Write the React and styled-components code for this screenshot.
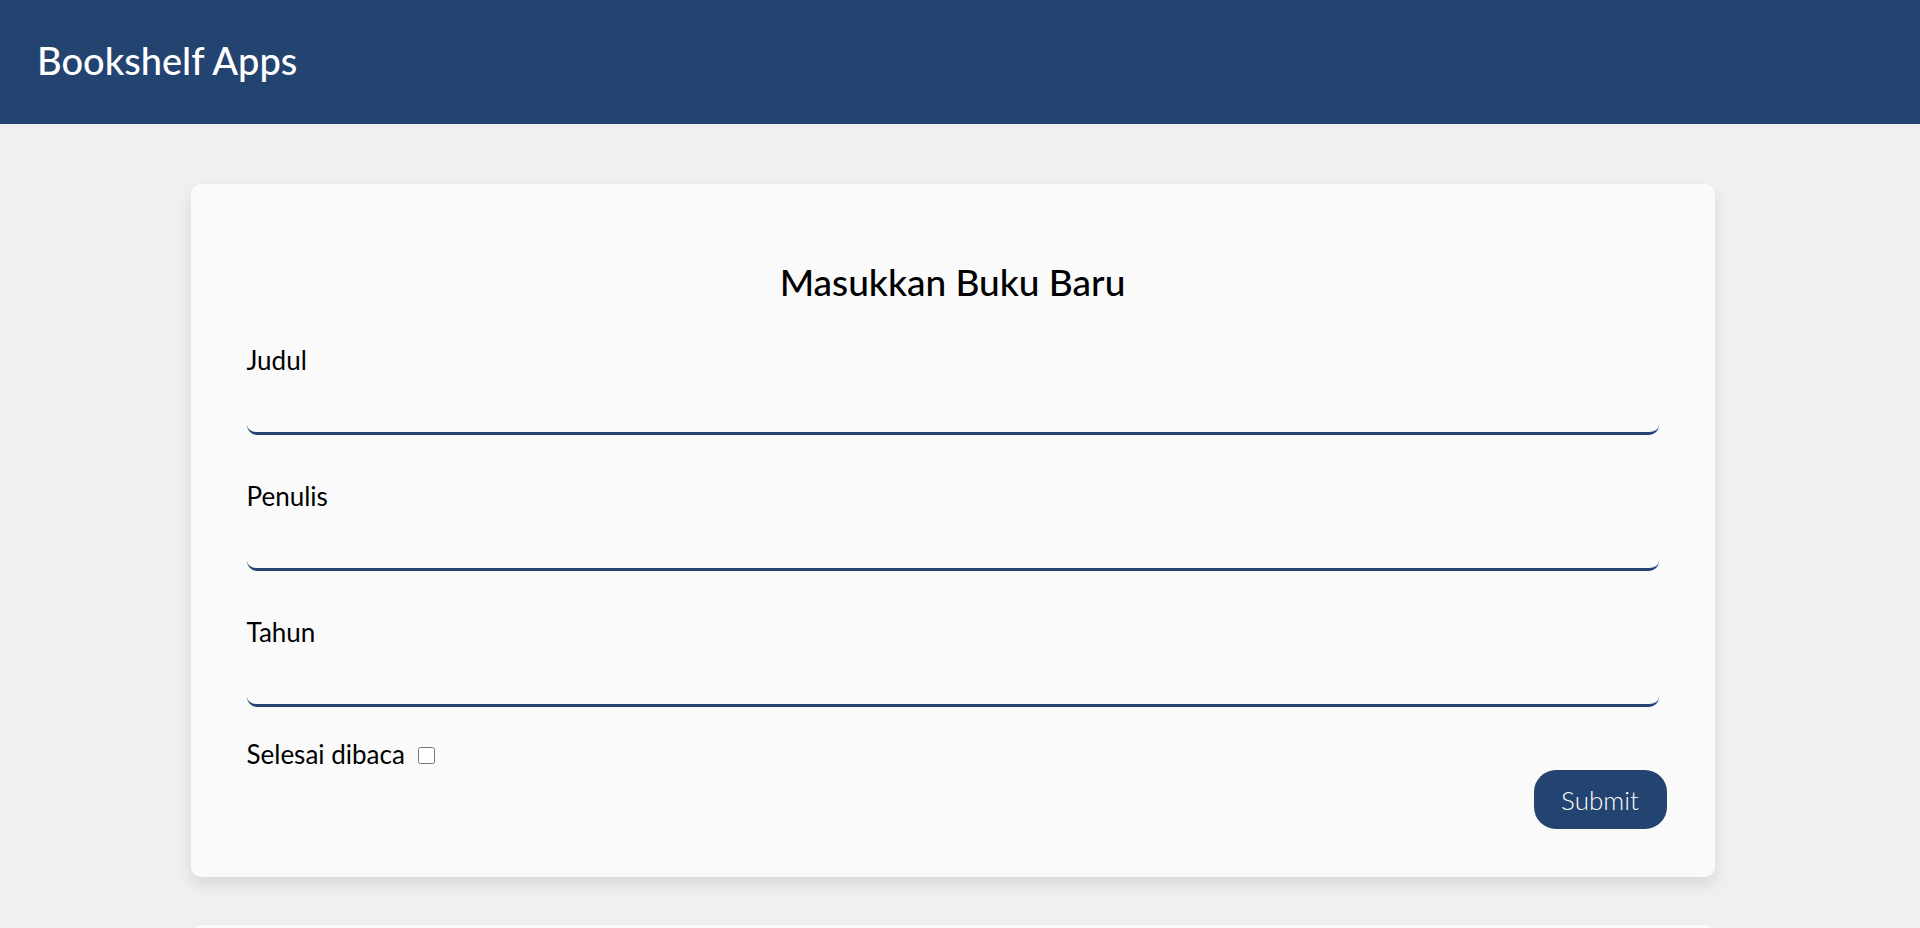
import React from 'react';
import styled, { createGlobalStyle } from 'styled-components';

const GlobalStyle = createGlobalStyle`
  * {
    box-sizing: border-box;
  }

  body {
    margin: 0;
    background: #f0f0f0;
    font-family: Lato, "Open Sans", sans-serif;
    color: #000;
  }
`;

const Header = styled.header`
  height: 124px;
  background: #234370;
  display: flex;
  align-items: center;
  padding: 0 0 5px 37px;

  h1 {
    margin: 0;
    color: #fff;
    font-size: 38px;
    font-weight: 500;
  }
`;

// the reference leaves 15px for the browser scrollbar on the right
const Main = styled.main`
  display: flex;
  flex-direction: column;
  align-items: center;
  gap: 48px;
  padding: 60px 15px 48px 0;
`;

const Card = styled.section`
  width: 80%;
  min-height: ${(p) => p.minHeight || 'auto'};
  padding: 48px;
  background: #fafafa;
  border-radius: 10px;
  box-shadow: 0 8px 16px rgba(0, 0, 0, 0.1);
`;

const Title = styled.h2`
  margin: 28px 0 41px;
  text-align: center;
  font-size: 37px;
  line-height: 44px;
  font-weight: 500;
`;

const Form = styled.form`
  display: flex;
  flex-direction: column;
`;

const Field = styled.div`
  display: flex;
  flex-direction: column;
  padding: 0 8px;
  margin-bottom: ${(p) => p.spacing || '46px'};
`;

const Label = styled.label`
  font-size: 26px;
  line-height: 31px;
  margin-bottom: 17px;
`;

const Input = styled.input`
  height: 42px;
  border: none;
  border-bottom: 3px solid #234370;
  border-radius: 10px;
  background: transparent;
  font-family: inherit;
  font-size: 22px;
  padding: 0 10px;
  outline: none;
`;

const CheckRow = styled.div`
  display: flex;
  align-items: center;
  gap: 13px;
  padding: 0 8px;
  font-size: 26px;
  line-height: 31px;

  input {
    width: 17px;
    height: 17px;
    margin: 2px 0 0;
  }
`;

const Actions = styled.div`
  display: flex;
  justify-content: flex-end;
`;

const SubmitButton = styled.button`
  width: 133px;
  height: 59px;
  border: none;
  border-radius: 22px;
  background: #234370;
  color: #fff;
  font-family: inherit;
  font-size: 26px;
  font-weight: 300;
  cursor: pointer;
`;

export default function App() {
  return (
    <>
      <GlobalStyle />
      <Header>
        <h1>Bookshelf Apps</h1>
      </Header>
      <Main>
        <Card>
          <Title>Masukkan Buku Baru</Title>
          <Form onSubmit={(e) => e.preventDefault()}>
            <Field>
              <Label htmlFor="judul">Judul</Label>
              <Input id="judul" type="text" />
            </Field>
            <Field>
              <Label htmlFor="penulis">Penulis</Label>
              <Input id="penulis" type="text" />
            </Field>
            <Field spacing="32px">
              <Label htmlFor="tahun">Tahun</Label>
              <Input id="tahun" type="number" />
            </Field>
            <CheckRow>
              <label htmlFor="selesai">Selesai dibaca</label>
              <input id="selesai" type="checkbox" />
            </CheckRow>
            <Actions>
              <SubmitButton type="submit">Submit</SubmitButton>
            </Actions>
          </Form>
        </Card>
        <Card minHeight="380px">
          <Title>Belum selesai dibaca</Title>
        </Card>
        <Card minHeight="380px">
          <Title>Selesai dibaca</Title>
        </Card>
      </Main>
    </>
  );
}
